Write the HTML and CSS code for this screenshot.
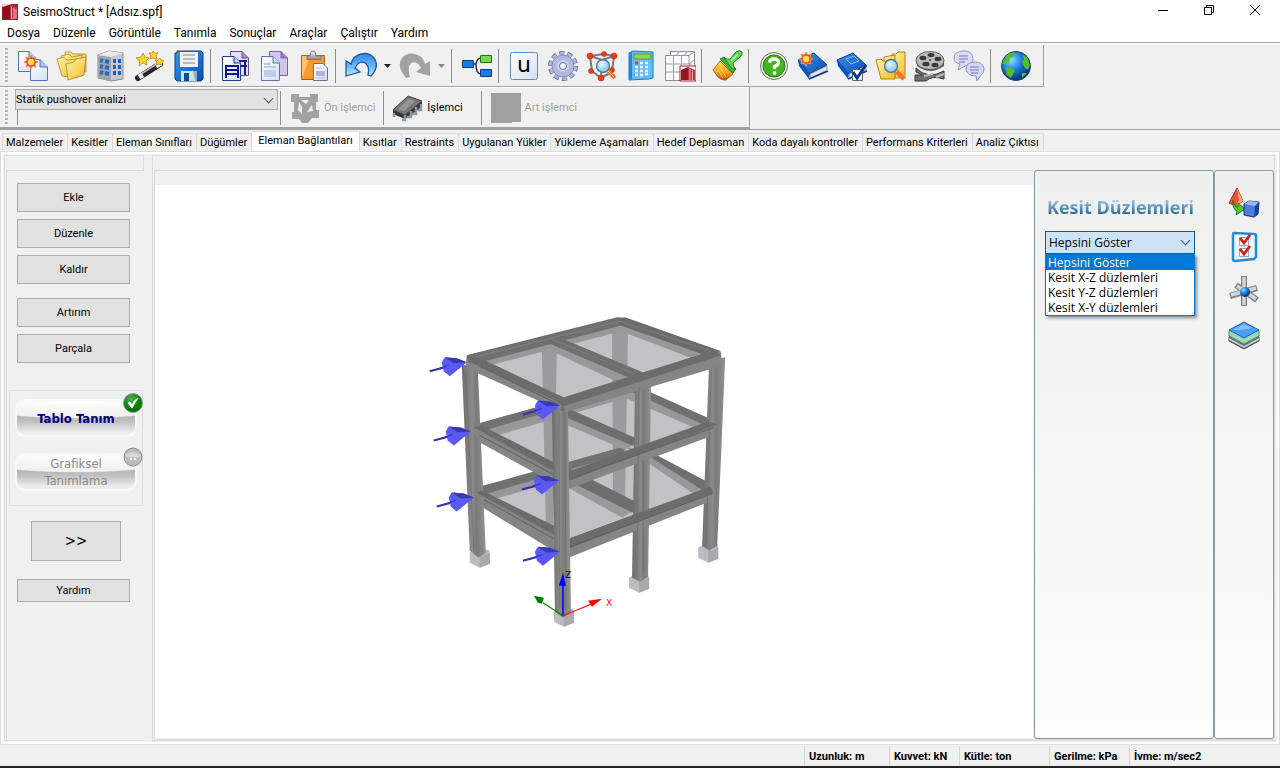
FILE: index.html
```html
<!DOCTYPE html>
<html lang="tr">
<head>
<meta charset="utf-8">
<title>SeismoStruct</title>
<link rel="stylesheet" href="styles.css">
</head>
<body>
<svg class="defs" aria-hidden="true">
  <defs>
    <linearGradient id="gold" x1="0" y1="0" x2="1" y2="1"><stop offset="0" stop-color="#fff3a8"/><stop offset="1" stop-color="#f0bc2c"/></linearGradient>
    <linearGradient id="paper" x1="0" y1="0" x2="1" y2="1"><stop offset="0" stop-color="#fff"/><stop offset="1" stop-color="#d3dff5"/></linearGradient>
    <linearGradient id="sky" x1="0" y1="0" x2="0" y2="1"><stop offset="0" stop-color="#2f86e0"/><stop offset=".55" stop-color="#63b6f4"/><stop offset="1" stop-color="#c3e6ff"/></linearGradient>
    <linearGradient id="blue" x1="0" y1="0" x2="1" y2="1"><stop offset="0" stop-color="#3f93ea"/><stop offset="1" stop-color="#0650b4"/></linearGradient>
    <linearGradient id="steel" x1="0" y1="0" x2="0" y2="1"><stop offset="0" stop-color="#f4f4f4"/><stop offset="1" stop-color="#8a8a8a"/></linearGradient>
    <linearGradient id="bristle" x1="0" y1="0" x2="0" y2="1"><stop offset="0" stop-color="#ffe24a"/><stop offset=".6" stop-color="#f6a21c"/><stop offset="1" stop-color="#c4400e"/></linearGradient>
    <radialGradient id="globe" cx=".35" cy=".3" r=".75"><stop offset="0" stop-color="#8cdcff"/><stop offset=".45" stop-color="#1c80e0"/><stop offset="1" stop-color="#04256c"/></radialGradient>
    <radialGradient id="lens" cx=".4" cy=".35" r=".7"><stop offset="0" stop-color="#e4f8ff"/><stop offset="1" stop-color="#77bfe2"/></radialGradient>
    <radialGradient id="ok" cx=".4" cy=".3" r=".8"><stop offset="0" stop-color="#5cb25c"/><stop offset=".5" stop-color="#0e860e"/><stop offset="1" stop-color="#046004"/></radialGradient>
    <linearGradient id="post" x1="0" y1="0" x2="1" y2="0"><stop offset="0" stop-color="#6c6c6c"/><stop offset=".45" stop-color="#8a8a8a"/><stop offset=".6" stop-color="#7a7a7a"/><stop offset="1" stop-color="#929292"/></linearGradient>
    <g id="sun"><path d="M0-7 1.6-4 5-5 4-1.6 7 0 4 1.6 5 5 1.6 4 0 7-1.6 4-5 5-4 1.6-7 0-4-1.6-5-5-1.6-4Z" fill="#f04818" stroke="#f6906c"/><circle r="3.2" fill="#ffe054"/></g>
    <g id="lensTool"><path d="M5 5 12 12" stroke="#ef7434" stroke-width="4"/><path d="M5 5 11 11" stroke="#ffd0a0" stroke-width="1"/><circle r="6.500" fill="url(#lens)" stroke="#53788c" stroke-width="1.4"/></g>
    <g id="book"><path d="M1 10 17 3 30 15 13 24Z" fill="url(#blue)" stroke="#063c94"/><path d="M1 10 13 24 12 29 2 16Z" fill="#0a55b8"/><path d="M13 24 30 16 30 20 14 28Z" fill="#e6e6e6" stroke="#7e848c" stroke-width=".7"/><path d="M12 29 31 21" stroke="#063c94" stroke-width="1.8"/></g>
    <g id="footing"><path d="M-10 0-5-3 9-3 10 0 10 11 0 15-10 10Z" fill="#bcbcc0"/><path d="M0 4 10 0 10 11 0 15Z" fill="#a9a9ad"/></g>
    <g id="load"><path d="M-37 9-18 4" stroke="#3434a8" stroke-width="2"/><path d="M0 0-10-4-22-5-25 0-23 9-17 14-12 10Z" fill="#5959f5"/><path d="M0 0-10-4-22-5-13 1Z" fill="#3a3ab0"/><path d="M-30 7-18 3" stroke="#3434a8"/></g>
  </defs>
</svg>

<header class="titlebar">
  <svg class="app-icon" viewBox="0 0 16 16"><path d="M0 0H16V16H0Z" fill="#a81824"/><path d="M1 4 8 1V15H1Z" fill="#8c0e1a"/><path d="M8 1 15 3V15H8Z" fill="#c03844"/><path d="M9.500 3V15M12 4V15M14 5V15" stroke="#f0b0b4"/><path d="M0 0H10L0 3Z" fill="#f4dadc"/></svg>
  <h1>SeismoStruct * [Adsız.spf]</h1>
  <div class="window-buttons">
    <button aria-label="Simge durumuna küçült"><svg viewBox="0 0 12 12"><path d="M1 6.500H11"/></svg></button>
    <button aria-label="Önceki boyut"><svg viewBox="0 0 12 12"><path d="M1.500 3.500H8.500V10.500H1.500ZM3.500 3.500V1.500H10.500V8.500H8.500"/></svg></button>
    <button aria-label="Kapat"><svg viewBox="0 0 12 12"><path d="M1 1 11 11M11 1 1 11"/></svg></button>
  </div>
</header>
<nav class="menubar">
  <button>Dosya</button><button>Düzenle</button><button>Görüntüle</button><button>Tanımla</button><button>Sonuçlar</button><button>Araçlar</button><button>Çalıştır</button><button>Yardım</button>
</nav>

<div class="toolbars">
  <div class="toolbar">
    <span class="grip"></span>
    <button class="tool" aria-label="Yeni"><svg viewBox="0 0 32 32"><path d="M1.500 1.500H12L18 7.500V21.500H1.500Z" fill="url(#paper)" stroke="#5476b4"/><path d="M12 1.500V7.500H18" fill="#c2d4f2" stroke="#5476b4"/><path d="M13.500 9.500H23L30.500 17V30.500H13.500Z" fill="url(#paper)" stroke="#5476b4"/><path d="M23 9.500V17H30.500" fill="#a9c6f0" stroke="#5476b4"/><use href="#sun" x="14" y="12"/></svg></button>
    <button class="tool" aria-label="Aç"><svg viewBox="0 0 32 32"><g fill="url(#gold)" stroke="#b0841c" stroke-width=".8"><path d="M9 2H15L17 4H30V22H11Z"/><path d="M5 6 13 4 16 7 26 5 26 26 8 26Z"/><path d="M1 9 8 7 11 10 21 9 21 28 6 26Z"/><path d="M10 14 18 12 20 9 30 7 28 25 12 30Z"/></g></svg></button>
    <button class="tool" aria-label="Bina"><svg viewBox="0 0 32 32"><path d="M3 5 14 1 28 3V29L16 31 3 28Z" fill="#c8cacd" stroke="#898c92"/><path d="M3 5 16 7V31L3 28Z" fill="#a2a5aa"/><path d="M3 5 14 1 28 3 16 7Z" fill="#e9e9ea"/><path d="M5 10 8 11M10 11 14 12M5 16 8 17M10 17 14 18M5 22 8 23M10 23 14 24" stroke="#2869c4" stroke-width="4"/><path d="M18 11H21M23 11H26M18 17H21M23 17H26M18 23H21M23 23H26" stroke="#1c5fc8" stroke-width="4"/></svg></button>
    <button class="tool" aria-label="Sihirbaz"><svg viewBox="0 0 32 32"><path d="M4 28 26 14" stroke="#252525" stroke-width="6" stroke-linecap="round"/><path d="M4 26 24 13" stroke="#b9b9b9" stroke-width="1.500"/><path d="M5 27 9 25M22 16 27 13" stroke="#eee" stroke-width="5"/><g fill="#ffd428" stroke="#c58810" stroke-width=".8"><path d="M9 3 11 7 15 8 12 11 13 15 9 13 5 16 6 11 2 8 7 7Z"/><path d="M19 1 21 3 24 3 22 6 23 9 19 8 16 9 17 6 15 3 18 3Z"/><path d="M26 8 27 10 30 11 28 13 28 15 25 14 22 15 23 12 21 10 24 10Z"/></g></svg></button>
    <button class="tool" aria-label="Kaydet"><svg viewBox="0 0 32 32"><path d="M2 3H4V1H28L30 3V29L28 31H4L2 29Z" fill="url(#blue)" stroke="#084084"/><path d="M7 2H25V17H7Z" fill="#f1f1f1"/><path d="M10 5H22M10 9H22M10 13H22" stroke="#b8bcc0" stroke-width="2"/><path d="M8 21H24V31H8Z" fill="#d4e2ec"/><path d="M11 23H16V31H11Z" fill="#0a4c9c"/><path d="M20 21H24V31H22Z" fill="#8fb1c8"/></svg></button>
    <span class="sep"></span>
    <button class="tool" aria-label="Kopyala"><svg viewBox="0 0 32 32"><path d="M10.500 1.500H22L28.500 8V25.500H10.500Z" fill="#e9ddf8" stroke="#604f91"/><path d="M22 1.500V8H28.500" fill="#a58bd0" stroke="#604f91"/><path d="M25 11V25M19 11H27M19 16H27" stroke="#1a1a94" stroke-width="2"/><path d="M2.500 6.500H14L20.500 13V30.500H2.500Z" fill="url(#paper)" stroke="#263c8c"/><path d="M14 6.500V13H20.500" fill="#b9cff0" stroke="#263c8c"/><path d="M6 28V16H18V28M6 20H18M6 24H18" fill="none" stroke="#10109c" stroke-width="2"/></svg></button>
    <button class="tool" aria-label="Çoğalt"><svg viewBox="0 0 32 32"><path d="M10.500 1.500H22L28.500 8V25.500H10.500Z" fill="#d4c3ec" stroke="#7962a5"/><path d="M22 1.500V8H28.500" fill="#9b7cca" stroke="#7962a5"/><path d="M2.500 6.500H14L20.500 13V30.500H2.500Z" fill="url(#paper)" stroke="#597aa7"/><path d="M14 6.500V13H20.500" fill="#c8daf2" stroke="#597aa7"/><path d="M5 14H12M5 17H17" stroke="#bbcbe4" stroke-width="2"/><path d="M5 20H17V27H5Z" fill="#becdec"/></svg></button>
    <button class="tool" aria-label="Yapıştır"><svg viewBox="0 0 32 32"><path d="M3.500 5.500H26.500V29.500H3.500Z" fill="#f59a30" stroke="#a76416"/><path d="M4 6H12L5 26H4Z" fill="#ffc572"/><path d="M9 9.500V6H12Q12 1 15 1 18 1 18 6H23V9.500Z" fill="url(#steel)" stroke="#777"/><path d="M15.500 13.500H25L29.500 18V30.500H15.500Z" fill="url(#paper)" stroke="#62729b"/><path d="M18 18H24M18 28H27" stroke="#afb8d8"/><path d="M18 21H27V26H18Z" fill="#b3b4e4"/></svg></button>
    <span class="sep"></span>
    <button class="tool" aria-label="Geri al"><svg viewBox="0 0 32 32"><path d="M1 11V26L15 22 10 18Q14 10 20 13 25 16 23 25L26 26Q35 16 29 8 24 2 16 4 8 6 6 14Z" fill="url(#sky)" stroke="#1d59a9" stroke-width="1.300"/></svg></button>
    <button class="drop" aria-label="Geri al listesi"><svg viewBox="0 0 7 4"><path d="M0 0H7L3.500 4Z"/></svg></button>
    <button class="tool" aria-label="Yinele" disabled><svg viewBox="0 0 32 32"><path d="M31 11V26L17 22 22 18Q18 10 12 13 8 17 11 27L7 28Q-3 16 3 8 8 2 16 4 24 6 26 14Z" fill="#a2a2a2"/></svg></button>
    <button class="drop" aria-label="Yineleme listesi" disabled><svg viewBox="0 0 7 4"><path d="M0 0H7L3.500 4Z"/></svg></button>
    <span class="sep"></span>
    <button class="tool" aria-label="Ağaç"><svg viewBox="0 0 32 32"><path d="M12 14H15Q16 8 20 8M15 14Q15 24 20 24" fill="none" stroke="#382850" stroke-width="1.500"/><path d="M1.500 10.500H12.500V17.500H1.500Z" fill="#187be0" stroke="#103c86"/><path d="M19.500 5.500H30.500V12.500H19.500Z" fill="#78da46" stroke="#26711e"/><path d="M19.500 19.500H30.500V26.500H19.500Z" fill="#187be0" stroke="#103c86"/></svg></button>
    <span class="sep"></span>
    <button class="tool" aria-label="Birimler"><svg viewBox="0 0 32 32"><rect x="2.500" y="2.500" width="27" height="27" rx="2" fill="url(#paper)" stroke="#668db9"/><text x="16" y="22" class="unit-letter">u</text></svg></button>
    <button class="tool" aria-label="Ayarlar"><svg viewBox="0 0 32 32"><circle cx="16" cy="16" r="12.500" fill="none" stroke="#60669c" stroke-width="5" stroke-dasharray="4.900 2.950"/><circle cx="16" cy="16" r="12.500" fill="none" stroke="#adb3dc" stroke-width="3.500" stroke-dasharray="4.100 3.750" stroke-dashoffset="-.4"/><circle cx="16" cy="16" r="11" fill="#b3b8df" stroke="#868dbd"/><circle cx="16" cy="16" r="6" fill="#cdd1ee"/><circle cx="16" cy="16" r="3.500" fill="#f2f2fb" stroke="#656a9a"/></svg></button>
    <button class="tool" aria-label="Model"><svg viewBox="0 0 32 32"><path d="M4 6 18 4 28 6 26 22 15 28 6 21ZM4 6 16 10 28 6M16 10 15 28" fill="none" stroke="#777b80" stroke-width="2"/><g fill="#ee3d16" stroke="#b82404" stroke-width=".6"><circle cx="4" cy="6" r="3"/><circle cx="18" cy="4" r="2.500"/><circle cx="28" cy="6" r="3"/><circle cx="5" cy="21" r="2.500"/><circle cx="26" cy="20" r="2.500"/><circle cx="15" cy="28" r="3"/></g><use href="#lensTool" x="17" y="16"/></svg></button>
    <button class="tool" aria-label="Hesap makinesi"><svg viewBox="0 0 32 32"><path d="M4 3 8 1 28 2V28L24 29 4 30Z" fill="#67bdf2" stroke="#1679c5"/><path d="M4 3 7 2V29L4 30Z" fill="#2189d8"/><path d="M9 4H26V9H9Z" fill="#8dd750" stroke="#507e42" stroke-width=".7"/><path d="M10 13H13" stroke="#e84224" stroke-width="3"/><path d="M15 13H18M20 13H23M10 17H13M15 17H18M20 17H23M10 21H13M15 21H18M20 21H23M10 25H13M15 25H18M20 24H23" stroke="#e9f4ff" stroke-width="2.700"/></svg></button>
    <button class="tool" aria-label="Tablo"><svg viewBox="0 0 32 32"><path d="M1.500 5.500H6.500V1.500H30.500V25H25V30.500H1.500Z" fill="#fafafd" stroke="#8b8b93"/><path d="M1 14H28M1 22H28M9.500 5V30M17.500 5V30M25 5V30M7 5.500H25L30 2M13 5 15 1M21 5 23 1M25 14 30 10" stroke="#9b9ba4" fill="none"/><path d="M16 16H32V31H16Z" fill="#fff" stroke="#a51b28"/><path d="M17 20 24 17V30H17Z" fill="#921521"/><path d="M24 17 31 20V30H24Z" fill="#bd3440"/><path d="M26 19V30M28.500 20V30" stroke="#e9aeb0"/></svg></button>
    <span class="sep"></span>
    <button class="tool" aria-label="Biçim boyacısı"><svg viewBox="0 0 32 32"><path d="M9 11 22 24 15 30Q11 31 7 27L2 20Z" fill="url(#bristle)" stroke="#a4550e" stroke-width=".8"/><path d="M9 17 15 27M6 19 12 28" stroke="#fbd262" stroke-width="1"/><path d="M9 9 13 7 25 19 22 23Z" fill="#3fb437" stroke="#24812b"/><path d="M13 8Q17 10 19 9L25 2Q29-1 31 2 32 5 29 7L22 13Q22 16 24 19L21 19Z" fill="#58d54c" stroke="#24812b"/><path d="M20 11 27 4" stroke="#bff5b2" stroke-width="1.500"/></svg></button>
    <span class="sep"></span>
    <button class="tool" aria-label="Yardım"><svg viewBox="0 0 32 32"><circle cx="16" cy="16" r="13.500" fill="#ececec" stroke="#727272"/><circle cx="16" cy="16" r="11" fill="#41b61e" stroke="#257c12"/><path d="M11.500 12.500Q12 9 16 9 20.500 9 20.500 12.500 20.500 15 16.500 16.500V19" fill="none" stroke="#fff" stroke-width="3.300"/><circle cx="16.500" cy="23" r="1.900" fill="#fff"/></svg></button>
    <button class="tool" aria-label="Yeni özellikler"><svg viewBox="0 0 32 32"><use href="#book"/><use href="#sun" x="9" y="9"/></svg></button>
    <button class="tool" aria-label="Doğrulama"><svg viewBox="0 0 32 32"><use href="#book"/><path d="M10 9 18 6 23 11 15 14Z" fill="none" stroke="#86c0f7"/><path d="M16.500 19.500H26.500V30.500H16.500Z" fill="#fff" stroke="#666"/><path d="M17 22 21 28 30 15" fill="none" stroke="#0b3b8f" stroke-width="3"/></svg></button>
    <button class="tool" aria-label="Örnekler"><svg viewBox="0 0 32 32"><g fill="url(#gold)" stroke="#b0841c"><path d="M17 4H21L23 2H30V28H17Z"/><path d="M9 7 20 5V28H9Z"/><path d="M1 10 6 9 8 11 20 11 20 29 6 29Z"/></g><use href="#lensTool" x="16" y="16"/><path d="M22 22 29 29" stroke="#ef7434" stroke-width="4"/></svg></button>
    <button class="tool" aria-label="Videolar"><svg viewBox="0 0 32 32"><path d="M2 18Q14 30 30 21V29Q18 25 12 31H1V25H8L2 22Z" fill="#717171" stroke="#373737"/><path d="M3 10V16Q16 26 30 16V10Z" fill="#5f5f5f"/><ellipse cx="16" cy="10.500" rx="14" ry="9" fill="#bbb" stroke="#5e5e5e"/><g fill="#393939"><ellipse cx="9" cy="8" rx="3.400" ry="2.200"/><ellipse cx="17" cy="5" rx="3.400" ry="2"/><ellipse cx="24" cy="9" rx="3.400" ry="2.200"/><ellipse cx="12" cy="14" rx="3.600" ry="2.300"/><ellipse cx="21" cy="15" rx="3.500" ry="2.200"/><circle cx="16" cy="10" r="1"/></g><path d="M10 26 19 24M22 27 30 24" stroke="#bbb" stroke-width="2"/></svg></button>
    <button class="tool" aria-label="Forum"><svg viewBox="0 0 32 32"><path d="M7 14 5 20 12 16Q20 15 20 9 20 1 11 1 1 1 1 8 1 13 7 14Z" fill="#dadcf8" stroke="#8f96cd"/><path d="M23 26 24 31 28 25Q31 23 31 19 30 12 22 12 13 12 13 19 14 26 23 26Z" fill="#d3d5f7" stroke="#8f96cd"/><path d="M6 6H15M6 9H15M17 17H26M17 20H26M6 12H12M18 23H25" stroke="#777dac" stroke-width="1.100"/></svg></button>
    <span class="sep"></span>
    <button class="tool" aria-label="Web sitesi"><svg viewBox="0 0 32 32"><circle cx="16" cy="16" r="14.500" fill="url(#globe)" stroke="#164179"/><path d="M5 8Q9 2 15 3L13 7 10 8 9 12 5 14 2 14ZM22 5 27 7 30 15 28 20 25 18 22 12 24 9ZM5 17 12 18 15 21 11 28 7 25ZM22 23 27 23 22 28Z" fill="#55bd2a"/></svg></button>
  </div>

  <div class="toolbar processor-bar">
    <span class="grip"></span>
    <div class="analysis">
      <select aria-label="Analiz tipi"><option>Statik pushover analizi</option></select>
      <div class="analysis-tray"></div>
    </div>
    <span class="sep"></span>
    <button class="stage" disabled><svg viewBox="0 0 32 32"><path d="M2 2H10V5H21V2H29V10H27V18H30V26H23L19 31H13L10 27H3V20H5V10H2Z" fill="#a2a2a2"/><path d="M10 10 9 18 13 22V15ZM12 8H20L17 12ZM23 13 24 19 18 20Z" fill="#efefef"/></svg>Ön işlemci</button>
    <span class="sep"></span>
    <button class="stage"><svg viewBox="0 0 32 32"><path d="M1 18 16 4 30 9V15L13 27 1 22Z" fill="#343434"/><path d="M1 18 16 4 30 9 13 23Z" fill="#777" stroke="#4b4b4b"/><path d="M6 17 17 7 23 9 12 19Z" fill="#969696"/><g fill="none" stroke="#8d96a1" stroke-width="2.500"><path d="M13 23V28H10M19 19V25H15M24 15V22H20M29 12V18H26M2 21V25"/></g></svg>İşlemci</button>
    <span class="sep"></span>
    <button class="stage" disabled><svg viewBox="0 0 32 32"><path d="M1 1H31V30H22V31H1Z" fill="#a0a0a0"/></svg>Art işlemci</button>
  </div>
</div>

<nav class="tabs" role="tablist">
  <button role="tab">Malzemeler</button><button role="tab">Kesitler</button><button role="tab">Eleman Sınıfları</button><button role="tab">Düğümler</button><button role="tab" aria-selected="true">Eleman Bağlantıları</button><button role="tab">Kısıtlar</button><button role="tab">Restraints</button><button role="tab">Uygulanan Yükler</button><button role="tab">Yükleme Aşamaları</button><button role="tab">Hedef Deplasman</button><button role="tab">Koda dayalı kontroller</button><button role="tab">Performans Kriterleri</button><button role="tab">Analiz Çıktısı</button>
</nav>

<main class="workspace">
  <aside class="side">
    <div class="side-head"></div>
    <div class="side-body">
      <div class="actions">
        <button class="push">Ekle</button>
        <button class="push">Düzenle</button>
        <button class="push">Kaldır</button>
      </div>
      <div class="actions">
        <button class="push">Artırım</button>
        <button class="push">Parçala</button>
      </div>
      <div class="modes">
        <button class="gloss on">Tablo Tanım<svg class="badge" viewBox="0 0 20 20"><circle cx="10" cy="10" r="9.500" fill="url(#ok)" stroke="#8b9d8b"/><path d="M5 10 7 9 9 12Q11 7 15 5 12 9 9 15Z" fill="#fff" stroke="#fff"/></svg></button>
        <button class="gloss">Grafiksel Tanımlama<svg class="badge" viewBox="0 0 20 20"><circle cx="10" cy="10" r="9" fill="#bdbdbd" stroke="#8d8d8d"/><path d="M2 9Q10 1 18 9Q10 12 2 9Z" fill="#d8d8d8"/><path d="M7 12H9M11 12H13" stroke="#fff" stroke-width="2"/></svg></button>
      </div>
      <button class="push next">&gt;&gt;</button>
      <button class="push help">Yardım</button>
    </div>
  </aside>

  <section class="stage-area">
    <div class="stage-head"></div>
    <div class="stage-row">
      <div class="canvas">
        <svg viewBox="156 185 876 552" role="img" aria-label="Üç katlı yapı modeli">
          <!-- rear columns -->
          <path d="M612 328H628L625 500H613Z" fill="#98989c"/><path d="M542 350H557L553 524H546Z" fill="#98989c"/>
          <g fill="#9c9ca2" fill-opacity=".62">
            <path d="M483 490 535 473 624 449 704 488 566 541Z"/>
            <path d="M484 427 624 387 708 422 566 477Z"/>
            <path d="M482 361 621 326 708 354 563 397Z"/>
          </g>
          <!-- third floor frame, lowest in view -->
          <path d="M480 488 624 446 624 460 490 500Z" fill="#98989b"/><path d="M480 486 624 446 624 453 484 494Z" fill="#717171"/>
          <path d="M624 446 644 450 714 486 696 495Z" fill="#99999c"/><path d="M630 444 648 450 716 486 703 490Z" fill="#707070"/>
          <path d="M556 462 641 506 622 517 548 476Z" fill="#99999c"/><path d="M558 462 641 504 632 512 554 473Z" fill="#6e6e6e"/>
          <!-- second floor frame -->
          <path d="M472 425 624 383 624 398 494 436Z" fill="#98989b"/><path d="M472 425 624 382 624 390 484 430Z" fill="#717171"/>
          <path d="M624 383 716 422 696 428 624 397Z" fill="#99999c"/><path d="M628 382 716 421 705 425 628 390Z" fill="#707070"/>
          <path d="M550 400 641 441 624 449 550 417Z" fill="#99999c"/><path d="M550 400 641 440 632 445 550 410Z" fill="#6e6e6e"/>
          <!-- roof frame -->
          <path d="M467 355 621 317 625 330 494 364Z" fill="#98989b"/><path d="M467 355 617 317 625 318 622 325 481 362Z" fill="#707070"/>
          <path d="M621 318 721 352 697 360 621 331Z" fill="#98989b"/><path d="M619 318 625 317 721 351 708 356 620 325Z" fill="#6b6b6b"/>
          <path d="M550 337 554 335 643 373 616 381 550 350Z" fill="#98989b"/><path d="M550 336 554 335 645 373 628 377 549 343Z" fill="#6f6f6f"/>
          <path d="M474 357 620 321 714 352M552 339 636 374" fill="none" stroke="#7e7e7e"/>
          <use href="#footing" x="480" y="552"/><use href="#footing" x="639" y="577"/><use href="#footing" x="708" y="547"/><use href="#footing" x="564" y="611"/>
          <!-- side columns -->
          <path d="M462 364 478 368 486 552 479 557 470 550Z" fill="url(#post)"/><path d="M709 360 725 357 717 545 709 550 702 545Z" fill="url(#post)"/>
          <path d="M635 383 651 378 648 576 640 581 632 577Z" fill="url(#post)"/>
          <!-- front beams -->
          <g fill="#858585"><path d="M475 493 482 491 560 529V554L483 507Z"/><path d="M563 540 710 487 716 490 712 500 566 558Z"/><path d="M472 429 482 426 560 466V486L480 442Z"/><path d="M563 474 708 422 718 424 710 436 567 489Z"/><path d="M467 355 478 357 566 398 560 410 478 373 466 365Z"/><path d="M557 401 710 351 721 352 721 366 710 369 568 411Z"/></g>
          <g fill="#6c6c6c"><path d="M476 492 482 490 560 528V537Z"/><path d="M563 540 710 486 713 492 566 549Z"/><path d="M474 427 482 425 560 465V474Z"/><path d="M563 473 708 421 718 424 567 481Z"/><path d="M467 355 478 357 566 398 559 402 468 361Z"/><path d="M557 401 566 396 714 350 721 355 563 406Z"/></g>
          <path d="M480 366 559 404M480 435 559 477M484 499 559 541M565 480 714 427M565 548 712 493" fill="none" stroke="#616161"/>
          <path d="M552 406 563 411 568 406 571 612 563 617 555 611Z" fill="url(#post)"/>
          <path d="M466 373 474 550M711 368 706 545M639 387 637 575M643 460 643 570M559 412 560 608M565 412 566 610" fill="none" stroke="#696969" stroke-opacity=".55"/>
          <use href="#load" x="467" y="362"/><use href="#load" x="560" y="405"/><use href="#load" x="471" y="431"/><use href="#load" x="559" y="480"/><use href="#load" x="474" y="497"/><use href="#load" x="560" y="551"/>
          <path d="M563 615V584" stroke="#00f" stroke-width="1.500"/><path d="M563 572 566 585H559Z" fill="#00f"/>
          <path d="M563 615 592 603" stroke="red"/><path d="M602 598 592 606 588 600Z" fill="red"/>
          <path d="M563 615 543 602" stroke="green"/><path d="M534 595 544 597 542 603 538 602Z" fill="green"/>
          <text x="565" y="577" class="axis axis-z">Z</text><text x="606" y="605" class="axis axis-x">X</text>
        </svg>
      </div>
      <aside class="planes">
        <h2 id="planes-title">Kesit Düzlemleri</h2>
        <div class="picker">
          <select aria-labelledby="planes-title"><option>Hepsini Göster</option></select>
          <ul role="listbox" aria-labelledby="planes-title">
            <li role="option" aria-selected="true">Hepsini Göster</li>
            <li role="option">Kesit X-Z düzlemleri</li>
            <li role="option">Kesit Y-Z düzlemleri</li>
            <li role="option">Kesit X-Y düzlemleri</li>
          </ul>
        </div>
      </aside>
      <aside class="rail">
        <button aria-label="Model görünümü"><svg viewBox="0 0 32 32"><path d="M1 16 9 1 15 14 8 19Z" fill="#ee5229" stroke="#9e2e17"/><path d="M9 1 11 13 8 19 15 14Z" fill="#ffad80"/><path d="M5 13Q6 20 10 20V16L17 22 8 28 9 24Q4 22 5 13Z" fill="#54c62d" stroke="#1e7926"/><path d="M16 17 21 14 31 15 30 27 26 30 16 28Z" fill="#4c7edd" stroke="#15317b"/><path d="M16 17 21 14 31 15 27 19Z" fill="#9bb9fa"/><path d="M27 19 31 15 30 27 26 30Z" fill="#1c429f"/></svg></button>
        <button aria-label="Görüntü seçenekleri"><svg viewBox="0 0 32 32"><path d="M6 2 26 3Q28 3 28 5V26L26 28 7 30Q5 30 5 28V4Q5 2 6 2Z" fill="#eef4fb" stroke="#268bd4" stroke-width="2.500"/><path d="M11.500 6.500H20.500V14.500H11.500ZM11.500 17.500H20.500V25.500H11.500Z" fill="#fff" stroke="#9aa4af"/><path d="M12 7 16 12 22 4M12 18 16 23 22 15" fill="none" stroke="#ce211b" stroke-width="2.800"/></svg></button>
        <button aria-label="Düğüm görünümü"><svg viewBox="0 0 32 32"><g stroke="#7d8183" stroke-width="6"><path d="M16 1V31M2 21 29 13M8 10 29 25"/></g><g stroke="#d2d4d5" stroke-width="3.500"><path d="M16 2V30M3 20 28 13M9 11 28 24"/></g><circle cx="17" cy="17" r="5" fill="url(#globe)"/></svg></button>
        <button aria-label="Katmanlar"><svg viewBox="0 0 32 32"><path d="M1 18 16 10 31 18V22L16 30 1 22Z" fill="#6a7073" stroke="#4a4e50"/><path d="M1 20 16 28 31 20" fill="none" stroke="#ced2d4" stroke-width="1.500"/><path d="M1 12 16 4 31 12V17L16 25 1 17Z" fill="#98dab1" stroke="#4f8a68"/><path d="M1 11 16 3 31 11 16 19Z" fill="#4b9df1" stroke="#2460b1"/><path d="M5 11 16 5 24 9Q16 11 5 11Z" fill="#83c4ff"/></svg></button>
      </aside>
    </div>
  </section>
</main>

<footer class="statusbar">
  <span>Uzunluk: m</span><span>Kuvvet: kN</span><span>Kütle: ton</span><span>Gerilme: kPa</span><span>İvme: m/sec2</span>
</footer>
</body>
</html>
```
FILE: styles.css
```css
* { box-sizing: border-box; }
body {
  margin: 0;
  min-height: 100vh;
  display: flex;
  flex-direction: column;
  background: #f0f0f0;
  color: #000;
  font: 11px/14px Roboto, Tahoma, sans-serif;
}
button, select { font: inherit; color: inherit; margin: 0; padding: 0; border: 0; background: none; }
svg { display: block; fill: none; }
.defs { position: absolute; width: 0; height: 0; }

/* title and menu */
.titlebar { display: flex; align-items: center; height: 23px; padding: 0 2px; gap: 5px; background: #fff; font: 12px/16px Roboto, sans-serif; }
.titlebar h1 { margin: 0; font: inherit; flex: 1; }
.app-icon { width: 16px; height: 16px; }
.window-buttons { display: flex; align-self: flex-start; }
.window-buttons button { width: 46px; height: 20px; display: grid; place-items: center; }
.window-buttons svg { width: 12px; height: 12px; stroke: #000; }
.menubar { display: flex; gap: 1px; height: 19px; padding: 1px 1px 0; background: #fff; font: 12px/18px Roboto, sans-serif; }
.menubar button { padding: 0 6px; }

/* toolbars */
.toolbars { border-top: 1px solid #a0a0a0; border-bottom: 1px solid #a0a0a0; box-shadow: inset 0 1px #fff; padding-top: 2px; }
.toolbar { display: flex; align-items: center; width: max-content; height: 42px; border-right: 1px solid #a0a0a0; border-bottom: 1px solid #a0a0a0; padding: 0 8px 0 5px; }
.grip { width: 3px; height: 36px; margin-right: 5px; background: repeating-linear-gradient(#b4b4b4 0 2px, transparent 2px 4px); }
.sep { width: 1px; height: 34px; margin: 0 5px 0 2px; background: #8c8c8c; }
.tool { width: 39px; height: 36px; display: grid; place-items: center; }
.tool svg { width: 32px; height: 32px; }
.drop { width: 15px; height: 36px; display: grid; place-items: center; }
.drop svg { width: 7px; height: 4px; fill: #222; }
.drop:disabled svg { fill: #888; }
.unit-letter { font: 22px "DejaVu Sans", sans-serif; text-anchor: middle; fill: #000; }
.processor-bar { width: 750px; box-shadow: inset 0 1px #fff; border-bottom-width: 2px; padding-top: 2px; }
.processor-bar .grip { margin-right: 7px; }
.processor-bar .sep { margin: 0 8px 0 2px; }
.analysis { width: 263px; align-self: flex-start; }
.analysis select { display: block; width: 100%; height: 21px; padding: 1px 6px 0 0; border: 1px solid #acacac; appearance: none; background: #e1e1e1; }
.analysis, .picker { position: relative; }
.analysis::after, .picker::before {
  content: ""; position: absolute; z-index: 1; right: 6px; top: 6px; width: 6px; height: 6px;
  border: solid #555; border-width: 0 1px 1px 0; rotate: 45deg; pointer-events: none;
}
.analysis-tray { height: 15px; margin-left: 2px; border-left: 1px solid #8c8c8c; }
.stage { display: flex; align-items: center; gap: 3px; padding-right: 6px; }
.stage:nth-of-type(2) { padding-right: 16px; }
.stage svg { width: 32px; height: 32px; }
.stage:disabled { color: #a0a0a0; }

/* tabs */
.tabs { display: flex; align-items: flex-end; height: 21px; padding-left: 2px; }
.tabs button { height: 18px; padding: 1px 4px 0 3px; border: solid #dadada; border-width: 1px 1px 0 0; white-space: nowrap; }
.tabs button:first-child { border-left-width: 1px; }
.tabs [aria-selected] { height: 20px; padding: 0 6px 1px; background: #fff; }

/* workspace */
.workspace { flex: 1; display: flex; gap: 8px; border: 1px solid #dcdcdc; padding: 3px 4px 3px 3px; box-shadow: inset 0 0 0 2px #fff; }
.side { width: 140px; display: flex; flex-direction: column; border: solid #dcdcdc; border-width: 1px 0 0 1px; }
.side-head { height: 14px; border-right: 1px solid #dcdcdc; }
.side-body { flex: 1; margin-left: 1px; border: solid #dcdcdc; border-width: 1px 0 1px 1px; padding: 12px 0 0 2px; display: flex; flex-direction: column; }
.actions { display: flex; flex-direction: column; gap: 7px; padding: 0 14px 14px 8px; }
.push { height: 29px; background: #e1e1e1; border: 1px solid #adadad; }
.modes { margin: 13px 1px 0 0; border: 1px solid #dcdcdc; height: 116px; padding: 8px 5px 0; display: flex; flex-direction: column; gap: 16px; }
.gloss {
  position: relative; height: 38px; border-radius: 10px; padding: 0 18px; color: #8a8a8a;
  font: 13px/17px "DejaVu Sans Condensed", Tahoma, sans-serif;
  background: radial-gradient(ellipse 100% 52% at 50% 0, #fff 0, #f0f0f0 94%, transparent 100%), linear-gradient(#b4b4b4 40%, #c0c0c0 60%, #ececec 92%);
  border: 2px solid #f8f8f8;
}
.gloss.on { color: #00007e; font-weight: bold; padding: 0; }
.badge { position: absolute; right: -8px; top: -8px; width: 20px; height: 20px; }
.next { width: 90px; height: 40px; margin: 15px 0 18px 22px; font: 15px "DejaVu Sans Condensed", sans-serif; }
.help { height: 23px; margin: 0 14px 0 8px; }

.stage-area { flex: 1; min-width: 0; display: flex; flex-direction: column; border: 1px solid #dcdcdc; padding-left: 1px; }
.stage-head { height: 14px; }
.stage-row { flex: 1; display: flex; border: solid #dcdcdc; border-width: 1px 0 1px 1px; }
.canvas { flex: 1; min-width: 0; margin: 14px 1px 1px 0; background: #fff; display: flex; }
.canvas svg { flex: 1; min-width: 0; height: 0; min-height: 100%; }
.axis { font: 9px "DejaVu Sans", sans-serif; }
.axis-x { fill: red; }
.axis-z { fill: #000090; }
.planes, .rail { border: 1px solid #8798ad; border-radius: 3px; background: linear-gradient(#efefef, #fdfdfd); margin-top: -1px; }
.planes { width: 180px; padding: 24px 18px 0 10px; }
.planes h2 {
  margin: 0 -4px 12px 2px; font: 700 18px/24px "Open Sans", sans-serif; white-space: nowrap;
  background: linear-gradient(#9cc8e4 20%, #2c6890 80%); background-clip: text; color: transparent;
}
.picker { font: 12px/15px "Open Sans", sans-serif; }
.picker select { display: block; width: 100%; height: 23px; padding: 0 3px; border: 1px solid #0a5a9c; background: #cce4f7; appearance: none; }
.picker ul { position: absolute; inset: 100% 0 auto; margin: 0; padding: 0; list-style: none; background: #fff; border: 1px solid #0078d7; box-shadow: 2px 2px 3px #888; }
.picker li { padding: 0 2px; height: 15px; white-space: nowrap; }
.picker li[aria-selected] { background: #0078d7; color: #fff; }
.rail { width: 60px; display: flex; flex-direction: column; align-items: center; gap: 12px; padding-top: 16px; }
.rail svg { width: 32px; height: 32px; }

.statusbar { display: flex; justify-content: flex-end; height: 23px; border-bottom: 2px solid #222; padding: 1px 0 0; font-weight: bold; line-height: 19px; }
.statusbar span { border-left: 1px solid #d7d7d7; padding: 1px 0 0 4px; width: 85px; }
.statusbar span:nth-child(2) { width: 70px; }
.statusbar span:nth-child(3) { width: 90px; }
.statusbar span:nth-child(4) { width: 80px; }
.statusbar span:nth-child(5) { width: 151px; }
```
